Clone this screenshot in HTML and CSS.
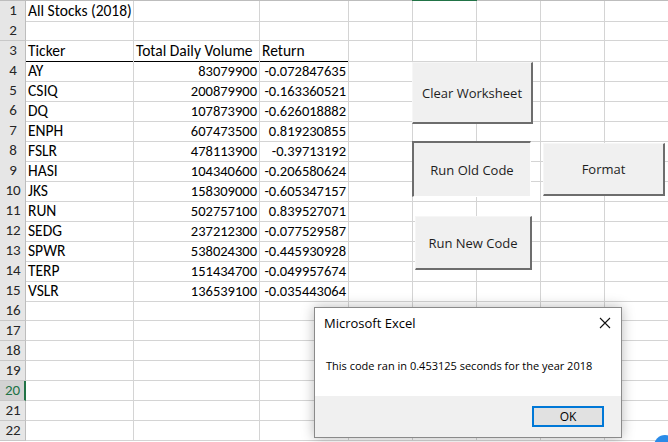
FILE: index.html
```html
<!DOCTYPE html>
<html>
<head>
<meta charset="utf-8">
<link rel="stylesheet" href="styles.css">
</head>
<body>
<div class="sheet">
  <div class="edge">
    <span class="edge-a"></span><span class="edge-sel"></span><span class="edge-b"></span>
  </div>
  <div class="row"><div class="rh">1</div><div class="c">All Stocks (2018)</div><div class="c"></div><div class="c"></div><div class="c"></div><div class="c"></div><div class="c"></div><div class="c"></div><div class="c"></div></div>
  <div class="row"><div class="rh">2</div><div class="c"></div><div class="c"></div><div class="c"></div><div class="c"></div><div class="c"></div><div class="c"></div><div class="c"></div><div class="c"></div></div>
  <div class="row"><div class="rh">3</div><div class="c hb">Ticker</div><div class="c hb">Total Daily Volume</div><div class="c hb">Return</div><div class="c"></div><div class="c"></div><div class="c"></div><div class="c"></div><div class="c"></div></div>
  <div class="row"><div class="rh">4</div><div class="c">AY</div><div class="c n">83079900</div><div class="c n">-0.072847635</div><div class="c"></div><div class="c"></div><div class="c"></div><div class="c"></div><div class="c"></div></div>
  <div class="row"><div class="rh">5</div><div class="c">CSIQ</div><div class="c n">200879900</div><div class="c n">-0.163360521</div><div class="c"></div><div class="c"></div><div class="c"></div><div class="c"></div><div class="c"></div></div>
  <div class="row"><div class="rh">6</div><div class="c">DQ</div><div class="c n">107873900</div><div class="c n">-0.626018882</div><div class="c"></div><div class="c"></div><div class="c"></div><div class="c"></div><div class="c"></div></div>
  <div class="row"><div class="rh">7</div><div class="c">ENPH</div><div class="c n">607473500</div><div class="c n">0.819230855</div><div class="c"></div><div class="c"></div><div class="c"></div><div class="c"></div><div class="c"></div></div>
  <div class="row"><div class="rh">8</div><div class="c">FSLR</div><div class="c n">478113900</div><div class="c n">-0.39713192</div><div class="c"></div><div class="c"></div><div class="c"></div><div class="c"></div><div class="c"></div></div>
  <div class="row"><div class="rh">9</div><div class="c">HASI</div><div class="c n">104340600</div><div class="c n">-0.206580624</div><div class="c"></div><div class="c"></div><div class="c"></div><div class="c"></div><div class="c"></div></div>
  <div class="row"><div class="rh">10</div><div class="c">JKS</div><div class="c n">158309000</div><div class="c n">-0.605347157</div><div class="c"></div><div class="c"></div><div class="c"></div><div class="c"></div><div class="c"></div></div>
  <div class="row"><div class="rh">11</div><div class="c">RUN</div><div class="c n">502757100</div><div class="c n">0.839527071</div><div class="c"></div><div class="c"></div><div class="c"></div><div class="c"></div><div class="c"></div></div>
  <div class="row"><div class="rh">12</div><div class="c">SEDG</div><div class="c n">237212300</div><div class="c n">-0.077529587</div><div class="c"></div><div class="c"></div><div class="c"></div><div class="c"></div><div class="c"></div></div>
  <div class="row"><div class="rh">13</div><div class="c">SPWR</div><div class="c n">538024300</div><div class="c n">-0.445930928</div><div class="c"></div><div class="c"></div><div class="c"></div><div class="c"></div><div class="c"></div></div>
  <div class="row"><div class="rh">14</div><div class="c">TERP</div><div class="c n">151434700</div><div class="c n">-0.049957674</div><div class="c"></div><div class="c"></div><div class="c"></div><div class="c"></div><div class="c"></div></div>
  <div class="row"><div class="rh">15</div><div class="c">VSLR</div><div class="c n">136539100</div><div class="c n">-0.035443064</div><div class="c"></div><div class="c"></div><div class="c"></div><div class="c"></div><div class="c"></div></div>
  <div class="row"><div class="rh">16</div><div class="c"></div><div class="c"></div><div class="c"></div><div class="c"></div><div class="c"></div><div class="c"></div><div class="c"></div><div class="c"></div></div>
  <div class="row"><div class="rh">17</div><div class="c"></div><div class="c"></div><div class="c"></div><div class="c"></div><div class="c"></div><div class="c"></div><div class="c"></div><div class="c"></div></div>
  <div class="row"><div class="rh">18</div><div class="c"></div><div class="c"></div><div class="c"></div><div class="c"></div><div class="c"></div><div class="c"></div><div class="c"></div><div class="c"></div></div>
  <div class="row"><div class="rh">19</div><div class="c"></div><div class="c"></div><div class="c"></div><div class="c"></div><div class="c"></div><div class="c"></div><div class="c"></div><div class="c"></div></div>
  <div class="row"><div class="rh sel">20</div><div class="c"></div><div class="c"></div><div class="c"></div><div class="c"></div><div class="c"></div><div class="c"></div><div class="c"></div><div class="c"></div></div>
  <div class="row"><div class="rh">21</div><div class="c"></div><div class="c"></div><div class="c"></div><div class="c"></div><div class="c"></div><div class="c"></div><div class="c"></div><div class="c"></div></div>
  <div class="row"><div class="rh">22</div><div class="c"></div><div class="c"></div><div class="c"></div><div class="c"></div><div class="c"></div><div class="c"></div><div class="c"></div><div class="c"></div></div>
</div>

<div class="btn raised btn-clear">Clear Worksheet</div>
<div class="btn pressed btn-old">Run Old Code</div>
<div class="btn raised btn-format">Format</div>
<div class="btn raised btn-new">Run New Code</div>

<div class="dialog">
  <div class="dlg-body">
    <div class="dlg-title">
      <span>Microsoft Excel</span>
      <svg class="dlg-x" width="12" height="12" viewBox="0 0 12 12"><path d="M1 1L11 11M11 1L1 11" stroke="#111" stroke-width="1.1" fill="none"/></svg>
    </div>
    <div class="dlg-msg">This code ran in 0.453125 seconds for the year 2018</div>
  </div>
  <div class="dlg-foot">
    <div class="dlg-ok">OK</div>
  </div>
</div>

<div class="blob"></div>
</body>
</html>
```

FILE: styles.css
```css
html, body {
  margin: 0;
  padding: 0;
  background: #ffffff;
  width: 668px;
  height: 442px;
  overflow: hidden;
}

.sheet {
  font-family: Calibri, Carlito, Lato, "Liberation Sans", sans-serif;
  font-size: 15.5px;
  color: #000;
}

.edge {
  display: flex;
  height: 1px;
}
.edge-a { width: 412px; background: #bdbdbd; }
.edge-sel { width: 65px; background: #217346; }
.edge-b { flex: 1; background: #bdbdbd; }

.row {
  display: grid;
  grid-template-columns: 26px 108px 126px 89px 64px 64px 64px 64px 64px;
  height: 20px;
}

.rh {
  background: #e6e6e6;
  border-right: 1px solid #bdbdbd;
  border-bottom: 1px solid #c8c8c8;
  color: #262626;
  text-align: center;
  line-height: 19px;
  font-size: 15px;
  padding-left: 1px;
}
.rh.sel {
  color: #217346;
  background: #d2d2d2;
  border-right: 2px solid #217346;
}

.c {
  border-right: 1px solid #d4d4d4;
  border-bottom: 1px solid #d4d4d4;
  line-height: 20px;
  padding: 0 2px 0 2px;
  white-space: nowrap;
  overflow: visible;
}
.c.n {
  text-align: right;
  font-size: 14.5px;
}
.c.hb {
  border-bottom: 1px solid #000;
}

.btn {
  position: absolute;
  box-sizing: border-box;
  background: #f0f0f0;
  display: flex;
  align-items: center;
  justify-content: center;
  font-family: "Segoe UI", "Open Sans", "Noto Sans", sans-serif;
  font-size: 13px;
  color: #1e1e1e;
}
.raised {
  border-right: 2px solid #6d6d6d;
  border-bottom: 2px solid #6d6d6d;
  border-left: 1px solid #f6f6f6;
  border-top: 1px solid #f6f6f6;
}
.pressed {
  border-left: 2px solid #6d6d6d;
  border-top: 2px solid #6d6d6d;
  border-right: 1px solid #ffffff;
  border-bottom: 1px solid #ffffff;
}
.btn-clear { left: 412px; top: 62px; width: 121px; height: 62px; }
.btn-old { left: 412px; top: 141px; width: 119px; height: 56px; }
.btn-format { left: 543px; top: 143px; width: 122px; height: 53px; }
.btn-new { left: 415px; top: 216px; width: 117px; height: 54px; }

.dialog {
  position: absolute;
  left: 314px;
  top: 307px;
  width: 308px;
  height: 131px;
  box-sizing: border-box;
  border: 1px solid #8a8a8a;
  background: #fff;
  box-shadow: 0 0 12px rgba(0, 0, 0, 0.28);
  display: flex;
  flex-direction: column;
  font-family: "Segoe UI", "Open Sans", "Noto Sans", sans-serif;
  font-size: 11px;
  color: #000;
}
.dlg-body {
  height: 88px;
  display: flex;
  flex-direction: column;
}
.dlg-title {
  display: flex;
  justify-content: space-between;
  align-items: center;
  padding: 3px 10px 0 9px;
  height: 23px;
  font-size: 13px;
}
.dlg-msg {
  padding: 24px 0 0 11px;
}
.dlg-foot {
  flex: 1;
  background: #f0f0f0;
  display: flex;
  justify-content: flex-end;
  align-items: flex-start;
  padding: 10px 17px 0 0;
}
.dlg-ok {
  box-sizing: border-box;
  width: 72px;
  height: 21px;
  border: 2px solid #0078d7;
  background: #e1e1e1;
  display: flex;
  align-items: center;
  justify-content: center;
  font-size: 12px;
}

.blob {
  position: absolute;
  left: 654px;
  top: 435px;
  width: 22px;
  height: 22px;
  border-radius: 50%;
  background: #2b8be8;
}
```
